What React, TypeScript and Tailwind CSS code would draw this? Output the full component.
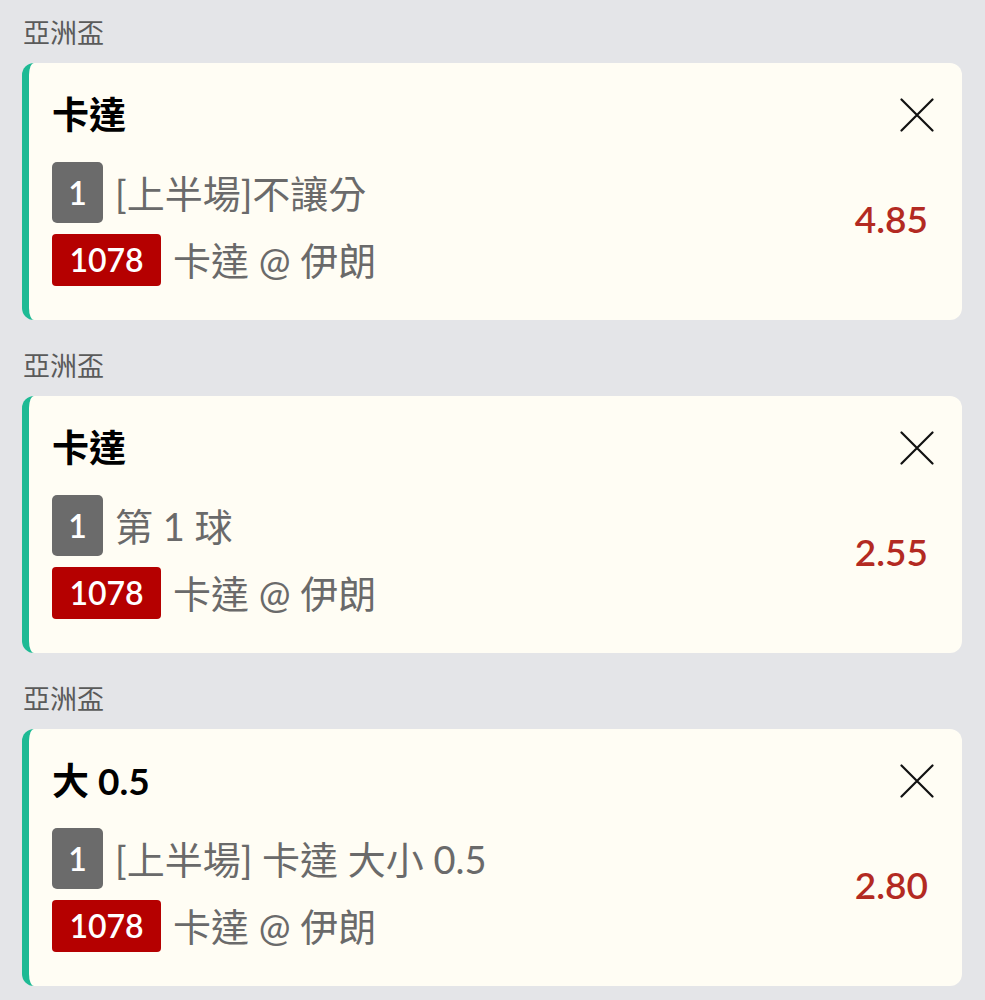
type Bet = {
  league: string;
  title: string;
  market: string;
  match: string;
  odds: string;
};

const bets: Bet[] = [
  { league: "亞洲盃", title: "卡達", market: "[上半場]不讓分", match: "卡達 @ 伊朗", odds: "4.85" },
  { league: "亞洲盃", title: "卡達", market: "第 1 球", match: "卡達 @ 伊朗", odds: "2.55" },
  { league: "亞洲盃", title: "大 0.5", market: "[上半場] 卡達 大小 0.5", match: "卡達 @ 伊朗", odds: "2.80" },
];

const font = "font-['Lato','Noto_Sans_CJK_TC',sans-serif]";

function CloseIcon() {
  return (
    <svg width="34" height="34" viewBox="0 0 34 34" className="mt-[3px]">
      <path d="M1.5 1.5 L32.5 32.5 M32.5 1.5 L1.5 32.5" stroke="#111" strokeWidth="2.2" strokeLinecap="round" fill="none" />
    </svg>
  );
}

function BetCard({ bet }: { bet: Bet }) {
  return (
    <div className="flex flex-col">
      <div className="h-[30px] pl-[1px] text-[27px] leading-[30px] text-[#5a5a5a]">{bet.league}</div>
      {/* BEGIN: Card */}
      <div className="mt-[15px] flex h-[257px] rounded-[12px] border-l-[7px] border-[#1dba94] bg-[#fffdf4] pl-[23px] pr-[28px] pt-[32px]">
        <div className="flex flex-1 flex-col">
          <div className="h-[40px] text-[37px] font-bold leading-[40px] text-black">{bet.title}</div>
          <div className="mt-[27px] flex items-center">
            <div className="flex h-[61px] w-[51px] items-center justify-center rounded-[5px] bg-[#6b6b6b] text-[32px] font-semibold text-white">
              1
            </div>
            <div className="ml-[12px] text-[38px] leading-[44px] text-[#6a6a6a]">{bet.market}</div>
          </div>
          <div className="mt-[11px] flex items-center">
            <div className="flex h-[52px] w-[109px] items-center justify-center rounded-[4px] bg-[#b50000] text-[32px] font-semibold text-white">
              1078
            </div>
            <div className="ml-[12px] text-[38px] leading-[44px] text-[#6a6a6a]">{bet.match}</div>
          </div>
        </div>
        <div className="flex flex-col items-end">
          <CloseIcon />
          <div className="mt-[65px] mr-[6px] text-[37px] font-semibold leading-[44px] text-[#b32a22]">{bet.odds}</div>
        </div>
      </div>
      {/* END: Card */}
    </div>
  );
}

export default function App() {
  return (
    <div className={`${font} min-h-[1000px] w-[985px] bg-[#e4e5e8] pl-[22px] pr-[23px] pt-[18px]`}>
      <div className="flex flex-col gap-[31px]">
        {bets.map((bet, i) => (
          <BetCard key={i} bet={bet} />
        ))}
      </div>
    </div>
  );
}
